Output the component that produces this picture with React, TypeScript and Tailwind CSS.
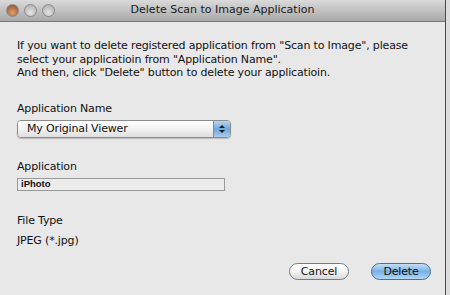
import React from "react";

const font = { fontFamily: '"DejaVu Sans", "Liberation Sans", sans-serif' };

const Light = ({ color }: { color: string }) => (
  <div
    className="w-[13px] h-[13px] rounded-full border border-[#8a8a8a]"
    style={{ background: color }}
  />
);

const App: React.FC = () => {
  return (
    <div className="w-[450px] h-[295px] flex bg-[#dcdcdc] overflow-hidden" style={font}>
      <div className="w-[446px] h-full flex flex-col bg-[#e8e8e8] border-r border-[#4a4a4a]">
        {/* Title bar */}
        <div className="h-[22px] grid grid-cols-[1fr_auto_1fr] items-center px-[6px] bg-gradient-to-b from-[#dadada] to-[#a9a9a9] border-b border-[#6e7a8c]">
          <div className="flex gap-[5px]">
            <Light color="radial-gradient(circle at 50% 70%, #e0a070, #8a4a20)" />
            <Light color="radial-gradient(circle at 50% 70%, #e4e4e4, #a8a8a8)" />
            <Light color="radial-gradient(circle at 50% 70%, #e4e4e4, #a8a8a8)" />
          </div>
          <div className="text-center text-[11px] text-[#1a1a1a]">
            Delete Scan to Image Application
          </div>
          <div />
        </div>

        {/* Body */}
        <div className="flex-1 flex flex-col px-[17px] text-[11px] tracking-[-0.16px] text-[#111] leading-[13.5px]">
          <p className="mt-[17px]">
            If you want to delete registered application from "Scan to Image", please
            <br />
            select your applicatioin from "Application Name".
            <br />
            And then, click "Delete" button to delete your applicatioin.
          </p>

          <div className="mt-[22px]">Application Name</div>
          <div className="mt-[5px] w-[214px] h-[18px] flex rounded-[4px] border border-[#8c8c8c] overflow-hidden shadow-[0_1px_1px_rgba(0,0,0,0.2)]">
            <div className="flex-1 flex items-center pl-[9px] bg-gradient-to-b from-white via-[#f2f2f2] to-[#dedede]">
              My Original Viewer
            </div>
            <div className="w-[17px] flex flex-col items-center justify-center gap-[2px] bg-gradient-to-b from-[#b9d6f2] via-[#6ea6dc] to-[#a8cbee] border-l border-[#6f8fb0]">
              <div className="w-0 h-0 border-l-[3px] border-r-[3px] border-b-[3px] border-l-transparent border-r-transparent border-b-[#1a1a1a]" />
              <div className="w-0 h-0 border-l-[3px] border-r-[3px] border-t-[3px] border-l-transparent border-r-transparent border-t-[#1a1a1a]" />
            </div>
          </div>

          <div className="mt-[22px]">Application</div>
          <div className="mt-[4px] w-[208px] h-[13px] flex items-center pl-[3px] bg-[#ececec] border border-[#9a9a9a] text-[9.5px] font-bold tracking-normal" style={{ fontFamily: '"Liberation Sans", Arial, sans-serif' }}>
            iPhoto
          </div>

          <div className="mt-[23px]">File Type</div>
          <div className="mt-[7px]">JPEG (*.jpg)</div>

          <div className="flex justify-end gap-[22px] mt-[15px] -mr-[3px]">
            <button className="w-[60px] h-[17px] rounded-full border border-[#7a7a7a] bg-gradient-to-b from-white via-[#f4f4f4] to-[#d8d8d8] text-[11px] leading-none">
              Cancel
            </button>
            <button className="w-[60px] h-[17px] rounded-full border border-[#4e6f93] bg-gradient-to-b from-[#c6dff6] via-[#77b0e6] to-[#b4d7f6] text-[11px] leading-none">
              Delete
            </button>
          </div>
        </div>
      </div>
    </div>
  );
};

export default App;
